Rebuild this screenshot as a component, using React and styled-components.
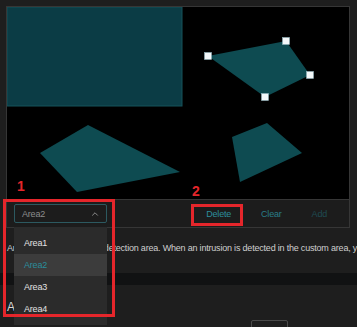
import styled, { createGlobalStyle } from "styled-components"
import { ChevronUp } from "lucide-react"

const Global = createGlobalStyle`
  html, body {
    margin: 0;
    padding: 0;
    background: #1e1e1e;
    overflow: hidden;
  }
  * { box-sizing: border-box; }
`

const Page = styled.div`
  position: relative;
  width: 357px;
  height: 327px;
  overflow: hidden;
  padding: 6px 0 0 6px;
  background: #1e1e1e;
  font-family: "Liberation Sans", Arial, sans-serif;
  font-size: 9px;
  letter-spacing: -0.2px;
`

const Panel = styled.div`
  width: 344px;
  border: 1px solid #363636;
`

const Canvas = styled.div`
  height: 192px;
  background: #000;
  svg { display: block; }
`

const Toolbar = styled.div`
  height: 28px;
  border-top: 1px solid #363636;
  display: flex;
  align-items: center;
  padding: 0 8px 0 7px;
  background: #1c1c1c;
`

const SelectWrap = styled.div`
  position: relative;
`

const Select = styled.div`
  width: 93px;
  height: 19px;
  border: 1px solid #2c5960;
  border-radius: 2px;
  display: flex;
  align-items: center;
  justify-content: space-between;
  padding: 0 6px 0 7px;
  color: #8c8c8c;
  svg { color: #a0a0a0; }
`

const Menu = styled.div`
  position: absolute;
  top: 23px;
  left: 0;
  width: 93px;
  padding: 5px 0;
  background: #2b2b2b;
  z-index: 2;
`

const MenuItem = styled.div`
  height: 22px;
  line-height: 22px;
  padding-left: 10px;
  color: ${p => (p.active ? "#2a8d9b" : "#e2e2e2")};
  background: ${p => (p.active ? "#3c3c3c" : "transparent")};
`

const Spacer = styled.div`
  flex: 1;
`

const Actions = styled.div`
  display: flex;
  gap: 2px;
`

const Action = styled.div`
  padding: 0 14px;
  line-height: 22px;
  color: ${p => p.color};
`

const Desc = styled.p`
  margin: 13px 0 0 1px;
  line-height: 14px;
  color: #cfcfcf;
  white-space: nowrap;
`

const Band = styled.div`
  margin: 18px 0 0 -6px;
  width: 357px;
  height: 12px;
  background: #111213;
`

const Heading = styled.div`
  margin: 14px 0 0 1px;
  font-size: 12px;
  line-height: 16px;
  color: #d8d8d8;
`

const Ghost = styled.div`
  margin: 5px 0 0 245px;
  width: 37px;
  height: 20px;
  border: 1px solid #4a4a4a;
  border-radius: 2px;
`

const Mark = styled.div`
  position: absolute;
  border: 3px solid #e5262b;
  z-index: 3;
`

const Label = styled.div`
  position: absolute;
  color: #e5262b;
  font-size: 14px;
  font-weight: bold;
  letter-spacing: 0;
  line-height: 14px;
`

const handles = [[201, 49], [279, 34], [303, 68], [258, 90]]

const App = () => {
  return (
    <Page>
      <Global />
      <Panel>
        <Canvas>
          <svg width="342" height="192" viewBox="0 0 342 192">
            <rect x="0" y="0" width="175" height="99" fill="#0b3c45" stroke="#16525a" strokeWidth="1" />
            <polygon points="33,146 81,118 173,165 70,185" fill="#0e4b51" />
            <polygon points="225,130 260,116 295,146 233,175" fill="#0e4b51" />
            <polygon points={handles.map(h => h.join(",")).join(" ")} fill="#0e4b51" />
            {handles.map(([x, y]) => (
              <rect key={x} x={x - 3.5} y={y - 3.5} width="7" height="7" fill="#f3f8fa" stroke="#8fb3bb" strokeWidth="0.6" />
            ))}
          </svg>
        </Canvas>
        <Toolbar>
          <SelectWrap>
            <Select>
              Area2
              <ChevronUp size={10} strokeWidth={2} />
            </Select>
            <Menu>
              <MenuItem>Area1</MenuItem>
              <MenuItem active>Area2</MenuItem>
              <MenuItem>Area3</MenuItem>
              <MenuItem>Area4</MenuItem>
            </Menu>
          </SelectWrap>
          <Spacer />
          <Actions>
            <Action color="#2c8e9c">Delete</Action>
            <Action color="#2a7c88">Clear</Action>
            <Action color="#1f4b52">Add</Action>
          </Actions>
        </Toolbar>
      </Panel>
      <Desc>
        Area: Click to set custom detection area. When an intrusion is detected in the custom area, you will receive an alarm.
      </Desc>
      <Band />
      <Heading>Alarm Linkage</Heading>
      <Ghost />

      <Label style={{ left: 17, top: 179 }}>1</Label>
      <Label style={{ left: 192, top: 184 }}>2</Label>
      <Mark style={{ left: 3, top: 199, width: 112, height: 118 }} />
      <Mark style={{ left: 191, top: 204, width: 52, height: 22 }} />
    </Page>
  )
}

export default App
